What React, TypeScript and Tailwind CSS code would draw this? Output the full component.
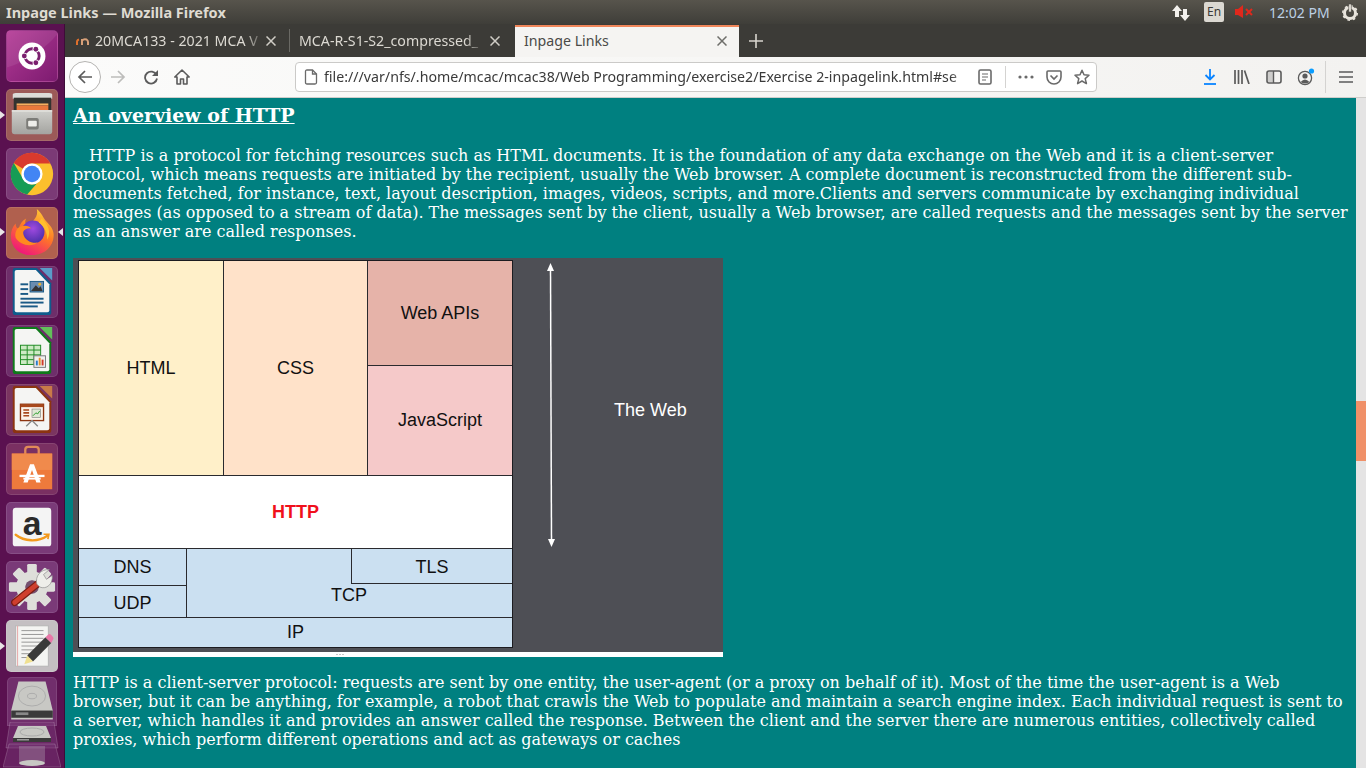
import React from 'react';

const uiFont = "font-['Noto_Sans',sans-serif]";

const Tile: React.FC<{ bg: string; children: React.ReactNode }> = ({ bg, children }) => (
  <div className={`w-[52px] h-[52px] shrink-0 rounded-[5px] border border-white/10 overflow-hidden ${bg}`}>
    {children}
  </div>
);

const UbuntuIcon = () => (
  <svg viewBox="0 0 52 52" className="w-full h-full">
    <path d="M0 38 C16 34 38 20 52 4 V0 H0Z" fill="#fff" opacity="0.08" />
    <circle cx="26" cy="26" r="14" fill="#fff" />
    <circle cx="26" cy="26" r="7.5" fill="none" stroke="#7b1f6e" strokeWidth="3" />
    <circle cx="18" cy="26" r="3.4" fill="#fff" />
    <circle cx="30" cy="19" r="3.4" fill="#fff" />
    <circle cx="30" cy="33" r="3.4" fill="#fff" />
    <circle cx="18" cy="26" r="2.5" fill="#7b1f6e" />
    <circle cx="30" cy="19" r="2.5" fill="#7b1f6e" />
    <circle cx="30" cy="33" r="2.5" fill="#7b1f6e" />
  </svg>
);

const FilesIcon = () => (
  <svg viewBox="0 0 52 52" className="w-full h-full">
    <defs>
      <linearGradient id="cab" x1="0" y1="0" x2="0" y2="1">
        <stop offset="0" stopColor="#cfcfcb" />
        <stop offset="1" stopColor="#a4a4a0" />
      </linearGradient>
    </defs>
    <path d="M6 5 Q6 3 9 3 H44 Q47 3 47 5 V9 H6Z" fill="#dcdcd8" />
    <rect x="7" y="8" width="39" height="13" fill="#33332f" />
    <rect x="10" y="14" width="33" height="2" fill="#f4b060" />
    <rect x="10" y="16" width="33" height="5" fill="#e8793c" />
    <path d="M5 21 H47 V43 Q47 46 44 46 H8 Q5 46 5 43Z" fill="url(#cab)" />
    <rect x="5" y="21" width="42" height="1.5" fill="#e6e6e2" />
    <rect x="20" y="29" width="13" height="12" rx="2" fill="#7c7c78" />
    <rect x="22" y="32" width="9" height="6" rx="1" fill="#eeeeea" />
  </svg>
);

const ChromeIcon = () => (
  <svg viewBox="0 0 52 52" className="w-full h-full">
    <circle cx="26" cy="26" r="22" fill="#fbc02d" />
    <path d="M7 14.5A22 22 0 0 1 45 15H26A11 11 0 0 0 16.5 20.5Z" fill="#d93a2e" />
    <path d="M7 14.5L17 31.5A11 11 0 0 0 31 36L21 47.4A22 22 0 0 1 7 14.5Z" fill="#169c55" />
    <circle cx="26" cy="26" r="11" fill="#fff" />
    <circle cx="26" cy="26" r="8.6" fill="#4285f4" />
  </svg>
);

const FirefoxIcon = () => (
  <svg viewBox="0 0 52 52" className="w-full h-full">
    <defs>
      <linearGradient id="ffa" x1="0.85" y1="0" x2="0.35" y2="1">
        <stop offset="0" stopColor="#ffd43a" />
        <stop offset="0.5" stopColor="#ff7a24" />
        <stop offset="1" stopColor="#f0187a" />
      </linearGradient>
      <radialGradient id="ffb" cx="0.5" cy="0.35" r="0.65">
        <stop offset="0" stopColor="#a04ae0" />
        <stop offset="1" stopColor="#4a2fa8" />
      </radialGradient>
    </defs>
    <path d="M31 1C37 6 37 10 41 14C47 20 50 25 48 33C45 44 36 49 25 49C13 49 4 41 4 29C4 24 6 19 9 16C9 19 10 21 12 22C13 17 16 13 20 11C18 15 19 17 22 18C27 14 33 9 31 1Z" fill="url(#ffa)" />
    <circle cx="27" cy="25" r="12" fill="url(#ffb)" />
    <path d="M11 21C16 17 23 18 25 21C20 21 16 23 17 27C18 33 25 37 32 36C25 41 14 39 9 31C8 27 9 24 11 21Z" fill="#ff8a1f" />
    <path d="M36 11C43 17 46 25 42 33C42 26 39 19 33 15Z" fill="#ffc02e" />
  </svg>
);

const DocBase: React.FC<{ edge: string; tint: string; children: React.ReactNode }> = ({ edge, tint, children }) => (
  <svg viewBox="0 0 52 52" className="w-full h-full">
    <path d="M34 1H47V14Z" fill={tint} />
    <path d="M6 3Q6 1 8 1H31L46 17V47Q46 50 43 50H9Q6 50 6 47Z" fill={edge} />
    <path d="M8 5Q8 3 10 3H30L44 18V45Q44 47 42 47H10Q8 47 8 45Z" fill="#f5f5f3" />
    {children}
  </svg>
);

const WriterIcon = () => (
  <DocBase edge="#0f5c8c" tint="#5a9cc8">
    <rect x="14" y="17" width="8" height="2" fill="#1a5a86" />
    <rect x="14" y="22" width="8" height="2" fill="#1a5a86" />
    <rect x="14" y="27" width="8" height="2" fill="#1a5a86" />
    <rect x="24" y="15" width="14" height="11" fill="#6a8cb0" stroke="#1a5a86" />
    <path d="M25 25L30 19L33 22L35 20L37 25Z" fill="#333" />
    <circle cx="34" cy="18" r="1.5" fill="#e8b030" />
    <rect x="14" y="32" width="24" height="2" fill="#1a5a86" />
    <rect x="14" y="36" width="24" height="2" fill="#1a5a86" />
    <rect x="14" y="40" width="18" height="2" fill="#1a5a86" />
  </DocBase>
);

const CalcIcon = () => (
  <DocBase edge="#0f7a1a" tint="#62c05a">
    <rect x="14" y="20" width="21" height="20" fill="#cdeac4" stroke="#1e8a22" />
    <path d="M14 25H35M14 30H35M14 35H35M21 20V40M28 20V40" stroke="#1e8a22" />
    <rect x="28" y="31" width="12" height="12" fill="#f0f0ee" stroke="#777" />
    <rect x="30" y="36" width="2" height="5" fill="#2a7ac8" />
    <rect x="33" y="33" width="2" height="8" fill="#e8902a" />
    <rect x="36" y="35" width="2" height="6" fill="#d03a2a" />
  </DocBase>
);

const ImpressIcon = () => (
  <DocBase edge="#8c3410" tint="#c87a48">
    <rect x="14" y="20" width="24" height="17" fill="#fbf3ea" stroke="#8c3410" strokeWidth="1.4" />
    <rect x="14" y="20" width="24" height="3" fill="#a8481c" />
    <path d="M17 26H23M17 29H23M17 32H23" stroke="#a8481c" strokeWidth="1.6" />
    <rect x="26" y="25" width="9" height="9" fill="#dfe8d4" stroke="#777" strokeWidth="0.6" />
    <path d="M27 32L30 29L32 30L34 27" stroke="#2a9a2a" fill="none" />
    <path d="M26 37L20 43M26 37L32 43" stroke="#888" strokeWidth="1.4" />
  </DocBase>
);

const StoreIcon = () => (
  <svg viewBox="0 0 52 52" className="w-full h-full">
    <path d="M19 11V6Q19 3 22 3H30Q33 3 33 6V11" fill="none" stroke="#e08a58" strokeWidth="2.4" />
    <path d="M5 10H47V47H5Z" fill="#ee7a3c" />
    <rect x="5" y="10" width="42" height="17" fill="#f08a4c" />
    <path d="M24 21H28L35 40H30.5L26 27L21.5 40H17Z" fill="#fff" />
    <rect x="13" y="32" width="26" height="2.4" fill="#fff" />
    <rect x="17" y="35" width="18" height="2" fill="#fff" />
  </svg>
);

const AmazonIcon = () => (
  <svg viewBox="0 0 52 52" className="w-full h-full">
    <rect x="6" y="5" width="40" height="40" rx="3" fill="#f4f4f4" />
    <text x="26" y="33" textAnchor="middle" fontFamily="'Liberation Sans',sans-serif" fontWeight="700" fontSize="35" fill="#2a2a2a">a</text>
    <path d="M9 33C18 40 32 41 42 34" fill="none" stroke="#f39a1d" strokeWidth="2.4" strokeLinecap="round" />
    <path d="M38 32.5L43.5 32.5L42.5 37.5" fill="none" stroke="#f39a1d" strokeWidth="1.8" />
  </svg>
);

const gearTeeth = [0, 45, 90, 135, 180, 225, 270, 315];

const SettingsIcon = () => (
  <svg viewBox="0 0 52 52" className="w-full h-full">
    <g fill="#dededa">
      {gearTeeth.map(a => (
        <rect key={a} x="21" y="2" width="10" height="12" rx="1.5" transform={`rotate(${a} 26 26)`} />
      ))}
    </g>
    <circle cx="26" cy="26" r="11.5" fill="none" stroke="#dededa" strokeWidth="10" />
    <circle cx="26" cy="26" r="7" fill="#75506f" />
    <path d="M8 42L34 21" stroke="#7a1c14" strokeWidth="7.5" strokeLinecap="round" />
    <path d="M8 42L34 21" stroke="#cf3f2e" strokeWidth="5" strokeLinecap="round" />
    <path d="M31 23C29 15 35 7 44 8L38 13L41 18L47 14C48 23 41 29 34 26Z" fill="#eeeeea" stroke="#8a8a8a" strokeWidth="0.7" />
  </svg>
);

const EditorIcon = () => (
  <svg viewBox="0 0 52 52" className="w-full h-full">
    <rect x="9" y="5" width="34" height="42" fill="#f4f4f2" stroke="#b5b5b5" />
    <path d="M11 5V47" stroke="#e6a8a8" />
    <g stroke="#8a8a8a" strokeWidth="0.9">
      <path d="M15 10H38M15 14H38M15 18H38M15 22H38M15 26H36M15 30H32M15 34H28M15 38H24" />
    </g>
    <path d="M40 17L46 23L27 42L21 36Z" fill="#3a3a3a" />
    <path d="M40 17L43 14Q44.5 13 46 14.5L48 17Q49 18.5 47.5 20L46 23Z" fill="#e878a8" />
    <path d="M21 36L27 42L18 45Z" fill="#f0e090" />
  </svg>
);

const DriveIcon = () => (
  <svg viewBox="0 0 52 52" className="w-full h-full">
    <path d="M11 4H41L49 36V46H3V36Z" fill="#c8c8c4" />
    <ellipse cx="26" cy="20" rx="15" ry="11" fill="none" stroke="#aaa" />
    <ellipse cx="26" cy="20" rx="5" ry="3" fill="none" stroke="#aaa" />
    <rect x="3" y="36" width="46" height="8" fill="#3a3a3a" />
    <rect x="8" y="38" width="14" height="3" fill="#888" />
  </svg>
);

const FoldedDrives = () => (
  <svg viewBox="0 0 58 46" className="w-full h-full">
    <path d="M7 0H51L55 26H3Z" fill="#7a3a78" fillOpacity="0.55" stroke="#fff" strokeOpacity="0.18" />
    <path d="M15 4H43L48 16V20H10V16Z" fill="#c8c8c4" />
    <ellipse cx="29" cy="10" rx="12" ry="4" fill="none" stroke="#aaa" />
    <rect x="10" y="16" width="38" height="4" fill="#3a3a3a" />
    <rect x="14" y="17" width="12" height="1.5" fill="#999" />
    <path d="M6 22H52L58 45H0Z" fill="#7a3a78" fillOpacity="0.45" stroke="#fff" strokeOpacity="0.18" />
    <path d="M16 24H42V40H16Z" fill="#b5a5b5" fillOpacity="0.35" />
    <ellipse cx="29" cy="41" rx="13" ry="3" fill="#c8c8c4" />
  </svg>
);

const Pointer: React.FC<{ right?: boolean; top: string }> = ({ right, top }) => (
  <svg viewBox="0 0 5 8" className={`absolute w-[5px] h-[8px] ${top} ${right ? 'right-[1px]' : 'left-0'}`}>
    <path d={right ? 'M5 0V8L0 4Z' : 'M0 0V8L5 4Z'} fill="#e8e4e6" />
  </svg>
);

const Launcher = () => (
  <div className="relative w-[65px] shrink-0 h-full bg-[#5a1150] border-r border-[#3e0c38] flex flex-col items-center pt-[6px] gap-[7px] overflow-hidden pr-[1px]">
    <Tile bg="bg-gradient-to-br from-[#b43a96] to-[#7d1b70]"><UbuntuIcon /></Tile>
    <Tile bg="bg-[#9c5a58]"><FilesIcon /></Tile>
    <Tile bg="bg-[#7b3a76]"><ChromeIcon /></Tile>
    <Tile bg="bg-[#b0604e]"><FirefoxIcon /></Tile>
    <Tile bg="bg-[#6e2e6a]"><WriterIcon /></Tile>
    <Tile bg="bg-[#6e2e6a]"><CalcIcon /></Tile>
    <Tile bg="bg-[#7a3560]"><ImpressIcon /></Tile>
    <Tile bg="bg-[#7a3062]"><StoreIcon /></Tile>
    <Tile bg="bg-[#7a3a78]"><AmazonIcon /></Tile>
    <Tile bg="bg-[#7a3a78]"><SettingsIcon /></Tile>
    <Tile bg="bg-[#c4bfc2]"><EditorIcon /></Tile>
    <div className="w-[50px] h-[49px] shrink-0 -mt-[2px] rounded-t-[5px] bg-[#7a3a78]/70 border border-white/10"><DriveIcon /></div>
    <div className="w-[58px] h-[46px] shrink-0 -mt-[11px]"><FoldedDrives /></div>
    <Pointer top="top-[87px]" />
    <Pointer top="top-[204px]" />
    <Pointer right top="top-[204px]" />
    <Pointer top="top-[618px]" />
  </div>
);

const TopBar = () => (
  <div className={`h-[24px] shrink-0 flex items-center bg-gradient-to-b from-[#57544c] to-[#3f3e39] pl-[6px] text-[#dfdbd2] ${uiFont}`}>
    <span className="font-bold leading-none text-[14.5px]">Inpage Links — Mozilla Firefox</span>
    <div className="ml-auto flex items-center">
      <svg viewBox="0 0 20 18" className="w-[20px] h-[18px] mr-[13px] mt-[1px]">
        <path d="M6 1L1 7H4V13H8V7H11Z" fill="#f2f0ec" />
        <path d="M14 17L9 11H12V5H16V11H19Z" fill="#f2f0ec" />
      </svg>
      <div className="w-[20px] h-[20px] rounded-[2px] bg-[#dcd9d2] text-[#3c3b37] text-[12px] flex items-center justify-center mr-[10px]">En</div>
      <svg viewBox="0 0 20 14" className="w-[20px] h-[14px] mr-[15px]">
        <path d="M1 4H4L9 0V13L4 10H1Z" fill="#e0281c" />
        <path d="M12 4L18 10M18 4L12 10" stroke="#e0281c" strokeWidth="2" />
      </svg>
      <span className="text-[14px] text-[#bcd0e4] w-[60px] mr-[12px] whitespace-nowrap">12:02 PM</span>
      <svg viewBox="0 0 18 18" className="w-[18px] h-[18px] mr-[7px]">
        <circle cx="9" cy="10" r="5.5" fill="none" stroke="#e8e4dc" strokeWidth="3" />
        <circle cx="9" cy="10" r="7.2" fill="none" stroke="#e8e4dc" strokeWidth="1.6" strokeDasharray="2.5 3.15" />
        <rect x="7.8" y="1" width="2.4" height="8" fill="#e8e4dc" stroke="#4a4843" strokeWidth="0.6" />
      </svg>
    </div>
  </div>
);

const CloseX: React.FC<{ color: string }> = ({ color }) => (
  <svg viewBox="0 0 10 10" className="w-[10px] h-[10px] shrink-0">
    <path d="M0.5 0.5L9.5 9.5M9.5 0.5L0.5 9.5" stroke={color} strokeWidth="1.5" />
  </svg>
);

const TabBar = () => (
  <div className={`h-[33px] shrink-0 flex items-start bg-[#3c3b37] text-[14.2px] ${uiFont}`}>
    <div className="w-[225px] h-[23px] mt-[5px] flex items-center pl-[11px] pr-[13px] border-r border-[#6a6964]">
      <svg viewBox="0 0 14 10" className="w-[14px] h-[10px] shrink-0 mr-[5px]">
        <path d="M1 9V6Q1 4 3 3.5" stroke="#e0702c" strokeWidth="2" fill="none" />
        <path d="M6 9V3M6 4.5Q8 2.5 10.5 3.5Q12 4.5 12 6V9" stroke="#d8a078" strokeWidth="2" fill="none" />
      </svg>
      <span className="flex-1 whitespace-nowrap overflow-hidden text-[#dcd9d2] [mask-image:linear-gradient(to_right,black_88%,transparent)]">20MCA133 - 2021 MCA V</span>
      <span className="ml-[1px]"><CloseX color="#d0cdc6" /></span>
    </div>
    <div className="w-[225px] h-[23px] mt-[5px] flex items-center pl-[9px] pr-[15px]">
      <span className="flex-1 whitespace-nowrap overflow-hidden text-[#dcd9d2] [mask-image:linear-gradient(to_right,black_90%,transparent)]">MCA-R-S1-S2_compressed_</span>
      <span className="ml-[6px]"><CloseX color="#d0cdc6" /></span>
    </div>
    <div className="w-[224px] h-[32px] mt-[1px] flex items-center pl-[9px] pr-[12px] pb-[3px] bg-[#f5f4f2] border-t-2 border-[#f0865a] text-[#4a4a48]">
      <span className="flex-1 whitespace-nowrap">Inpage Links</span>
      <CloseX color="#6e6e6a" />
    </div>
    <svg viewBox="0 0 14 14" className="w-[14px] h-[14px] ml-[10px] mt-[10px]">
      <path d="M7 0V14M0 7H14" stroke="#d8d5ce" strokeWidth="1.6" />
    </svg>
  </div>
);

const ToolIcon: React.FC<{ w?: string; children: React.ReactNode }> = ({ w = 'w-[32px]', children }) => (
  <div className={`${w} h-[30px] shrink-0 flex items-center justify-center`}>{children}</div>
);

const Toolbar = () => (
  <div className={`h-[41px] shrink-0 flex items-center bg-gradient-to-r from-[#fbfbfa] to-[#f3f2f0] border-b border-[#cfcecb] pl-[4px] ${uiFont}`}>
    <div className="w-[32px] h-[32px] rounded-full border border-[#b5b4b2] bg-white flex items-center justify-center shrink-0">
      <svg viewBox="0 0 16 16" className="w-[16px] h-[16px]">
        <path d="M15 8H2M8 2L2 8L8 14" fill="none" stroke="#5b5b5b" strokeWidth="1.7" />
      </svg>
    </div>
    <ToolIcon w="w-[34px]">
      <svg viewBox="0 0 16 16" className="w-[16px] h-[16px]">
        <path d="M1 8H14M8 2L14 8L8 14" fill="none" stroke="#bdbdbb" strokeWidth="1.7" />
      </svg>
    </ToolIcon>
    <ToolIcon>
      <svg viewBox="0 0 16 16" className="w-[16px] h-[16px]">
        <path d="M13.5 6A6 6 0 1 0 14 9.5" fill="none" stroke="#5b5b5b" strokeWidth="1.8" />
        <path d="M15 1V7H9Z" fill="#5b5b5b" />
      </svg>
    </ToolIcon>
    <ToolIcon w="w-[30px]">
      <svg viewBox="0 0 16 16" className="w-[16px] h-[16px]">
        <path d="M8 1L0.8 8H3V15H6.5V10H9.5V15H13V8H15.2Z" fill="none" stroke="#5b5b5b" strokeWidth="1.6" strokeLinejoin="round" />
      </svg>
    </ToolIcon>
    <div className="ml-[98px] w-[802px] h-[30px] shrink-0 bg-white border border-[#cbcac8] rounded-[4px] flex items-center pl-[8px]">
      <svg viewBox="0 0 14 16" className="w-[14px] h-[16px] shrink-0 mr-[6px]">
        <path d="M1.5 2.5Q1.5 1 3 1H8.5L12.5 5V13.5Q12.5 15 11 15H3Q1.5 15 1.5 13.5Z" fill="none" stroke="#6a6a6a" strokeWidth="1.3" />
        <path d="M8.5 1V5H12.5" fill="none" stroke="#6a6a6a" strokeWidth="1.3" />
      </svg>
      <span className="w-[646px] shrink-0 whitespace-nowrap overflow-hidden text-[14.2px] text-[#3a3a3a] [mask-image:linear-gradient(to_right,black_97%,transparent)]">file:///var/nfs/.home/mcac/mcac38/Web Programming/exercise2/Exercise 2-inpagelink.html#se</span>
      <ToolIcon w="w-[30px]">
        <svg viewBox="0 0 14 16" className="w-[14px] h-[16px]">
          <rect x="1" y="1" width="12" height="14" rx="1.5" fill="none" stroke="#6a6a6a" strokeWidth="1.6" />
          <path d="M4 5H10M4 8H10M4 11H8" stroke="#6a6a6a" strokeWidth="1.2" />
        </svg>
      </ToolIcon>
      <div className="w-px h-[22px] shrink-0 bg-[#d4d3d1] ml-[5px] mr-[6px]" />
      <ToolIcon w="w-[28px]">
        <svg viewBox="0 0 16 4" className="w-[16px] h-[4px]">
          <circle cx="2" cy="2" r="1.6" fill="#6a6a6a" />
          <circle cx="8" cy="2" r="1.6" fill="#6a6a6a" />
          <circle cx="14" cy="2" r="1.6" fill="#6a6a6a" />
        </svg>
      </ToolIcon>
      <ToolIcon w="w-[28px]">
        <svg viewBox="0 0 16 15" className="w-[16px] h-[15px]">
          <path d="M1 2Q1 1 2 1H14Q15 1 15 2V7A7 7 0 0 1 1 7Z" fill="none" stroke="#6a6a6a" strokeWidth="1.6" />
          <path d="M4.5 5.5L8 9L11.5 5.5" fill="none" stroke="#6a6a6a" strokeWidth="1.7" />
        </svg>
      </ToolIcon>
      <ToolIcon w="w-[28px]">
        <svg viewBox="0 0 16 16" className="w-[16px] h-[16px]">
          <path d="M8 1.2L10 5.8L15 6.3L11.2 9.6L12.4 14.6L8 12L3.6 14.6L4.8 9.6L1 6.3L6 5.8Z" fill="none" stroke="#6a6a6a" strokeWidth="1.5" strokeLinejoin="round" />
        </svg>
      </ToolIcon>
    </div>
    <div className="flex items-center ml-auto">
      <ToolIcon>
        <svg viewBox="0 0 14 16" className="w-[14px] h-[16px]">
          <path d="M7 0V10M2.5 6L7 10.5L11.5 6" fill="none" stroke="#0a84ff" strokeWidth="1.8" />
          <path d="M1 15H13" stroke="#0a84ff" strokeWidth="1.8" />
        </svg>
      </ToolIcon>
      <ToolIcon>
        <svg viewBox="0 0 16 14" className="w-[16px] h-[14px]">
          <path d="M1 0V14M4.5 0V14M8 0V14M10.5 0.5L15 14" stroke="#5b5b5b" strokeWidth="1.7" />
        </svg>
      </ToolIcon>
      <ToolIcon>
        <svg viewBox="0 0 16 14" className="w-[16px] h-[14px]">
          <rect x="1" y="1" width="14" height="12" rx="2" fill="none" stroke="#5b5b5b" strokeWidth="1.6" />
          <rect x="2" y="2" width="5" height="10" fill="#5b5b5b" opacity="0.25" />
          <path d="M7.5 1V13" stroke="#5b5b5b" strokeWidth="1.4" />
        </svg>
      </ToolIcon>
      <ToolIcon>
        <svg viewBox="0 0 18 18" className="w-[18px] h-[18px]">
          <circle cx="8" cy="10" r="6.6" fill="none" stroke="#5b5b5b" strokeWidth="1.3" />
          <circle cx="8" cy="8" r="2.6" fill="#5b5b5b" />
          <path d="M3.6 14Q8 9 12.4 14Q8 17 3.6 14Z" fill="#5b5b5b" />
          <circle cx="14.5" cy="3" r="2.6" fill="#0a9dff" />
        </svg>
      </ToolIcon>
      <div className="w-px h-[32px] bg-[#d4d3d1] ml-[3px]" />
      <ToolIcon w="w-[40px]">
        <svg viewBox="0 0 14 12" className="w-[14px] h-[12px]">
          <path d="M0 1H14M0 6H14M0 11H14" stroke="#5b5b5b" strokeWidth="1.7" />
        </svg>
      </ToolIcon>
    </div>
  </div>
);

const Cell: React.FC<{ className?: string; children?: React.ReactNode }> = ({ className = '', children }) => (
  <div className={`flex items-center justify-center border-[#2a2a2e] ${className}`}>{children}</div>
);

const Diagram = () => (
  <div className="w-[650px] h-[399px] bg-white flex flex-col font-['Liberation_Sans',sans-serif] text-[18px] text-[#111]">
    <div className="h-[394px] bg-[#4e4f55] flex pl-[5px] pt-[2px]">
      <div className="w-[435px] h-[388px] border border-[#1c1c20] flex flex-col">
        <div className="h-[214px] flex">
          <Cell className="w-[145px] bg-[#fff0c9] border-r">HTML</Cell>
          <Cell className="w-[144px] bg-[#ffe2c9] border-r">CSS</Cell>
          <div className="flex-1 flex flex-col">
            <Cell className="h-[105px] bg-[#e6b3a9] border-b">Web APIs</Cell>
            <Cell className="flex-1 bg-[#f5c9c9]">JavaScript</Cell>
          </div>
        </div>
        <Cell className="h-[74px] bg-white border-y text-[#f0101c] font-bold">HTTP</Cell>
        <div className="h-[68px] flex">
          <div className="w-[108px] flex flex-col border-r border-[#2a2a2e]">
            <Cell className="h-[37px] bg-[#cbe0f1] border-b">DNS</Cell>
            <Cell className="flex-1 bg-[#cbe0f1] pt-[4px]">UDP</Cell>
          </div>
          <div className="flex-1 flex flex-col bg-[#cbe0f1]">
            <div className="h-[35px] flex justify-end">
              <Cell className="w-[161px] border-l border-b pt-[2px]">TLS</Cell>
            </div>
            <div className="flex-1 flex justify-center items-center pb-[11px] pr-[1px]">TCP</div>
          </div>
        </div>
        <Cell className="flex-1 bg-[#cbe0f1] border-t">IP</Cell>
      </div>
      <div className="relative flex-1 flex items-center text-white pl-[101px] pb-[91px]">
        <svg viewBox="0 0 14 284" className="absolute left-[31px] top-[3px] w-[14px] h-[284px]">
          <path d="M6.5 4L7.5 280" fill="none" stroke="#fff" strokeWidth="1.5" />
          <path d="M6.5 0L3 8H10ZM7.5 284L4 276H11Z" fill="#fff" />
        </svg>
        The Web
      </div>
    </div>
    <div className="flex-1 flex items-center pl-[263px]">
      <div className="flex gap-px">
        <span className="w-[2px] h-px bg-[#c8c8c8]" />
        <span className="w-[2px] h-px bg-[#c8c8c8]" />
        <span className="w-[2px] h-px bg-[#c8c8c8]" />
      </div>
    </div>
  </div>
);

const Page = () => (
  <div className="flex-1 min-h-0 flex overflow-hidden">
    <div className="flex-1 bg-[#008080] text-white font-['DejaVu_Serif',serif] text-[16px] leading-[19px] px-[8px] pt-[6px] overflow-hidden">
      <h2 className="text-[19px] leading-[23px] font-bold underline">An overview of HTTP</h2>
      <p className="mt-[19px]">
        <span className="inline-block w-[16px]" />HTTP is a protocol for fetching resources such as HTML documents. It is the foundation of any data exchange on the Web and it is a client-server protocol, which means requests are initiated by the recipient, usually the Web browser. A complete document is reconstructed from the different sub-documents fetched, for instance, text, layout description, images, videos, scripts, and more.Clients and servers communicate by exchanging individual messages (as opposed to a stream of data). The messages sent by the client, usually a Web browser, are called requests and the messages sent by the server as an answer are called responses.
      </p>
      <div className="mt-[17px]"><Diagram /></div>
      <p className="mt-[16px]">
        HTTP is a client-server protocol: requests are sent by one entity, the user-agent (or a proxy on behalf of it). Most of the time the user-agent is a Web browser, but it can be anything, for example, a robot that crawls the Web to populate and maintain a search engine index. Each individual request is sent to a server, which handles it and provides an answer called the response. Between the client and the server there are numerous entities, collectively called proxies, which perform different operations and act as gateways or caches
      </p>
    </div>
    <div className="w-[10px] shrink-0 bg-[#e5e4e4] flex flex-col">
      <div className="h-[303px] shrink-0" />
      <div className="h-[60px] shrink-0 bg-[#f09068]" />
    </div>
  </div>
);

export default function App() {
  return (
    <div className="w-[1366px] h-[768px] overflow-hidden flex flex-col bg-[#3c3b37]">
      <TopBar />
      <div className="flex-1 min-h-0 flex">
        <Launcher />
        <div className="flex-1 min-w-0 flex flex-col">
          <TabBar />
          <Toolbar />
          <Page />
        </div>
      </div>
    </div>
  );
}
